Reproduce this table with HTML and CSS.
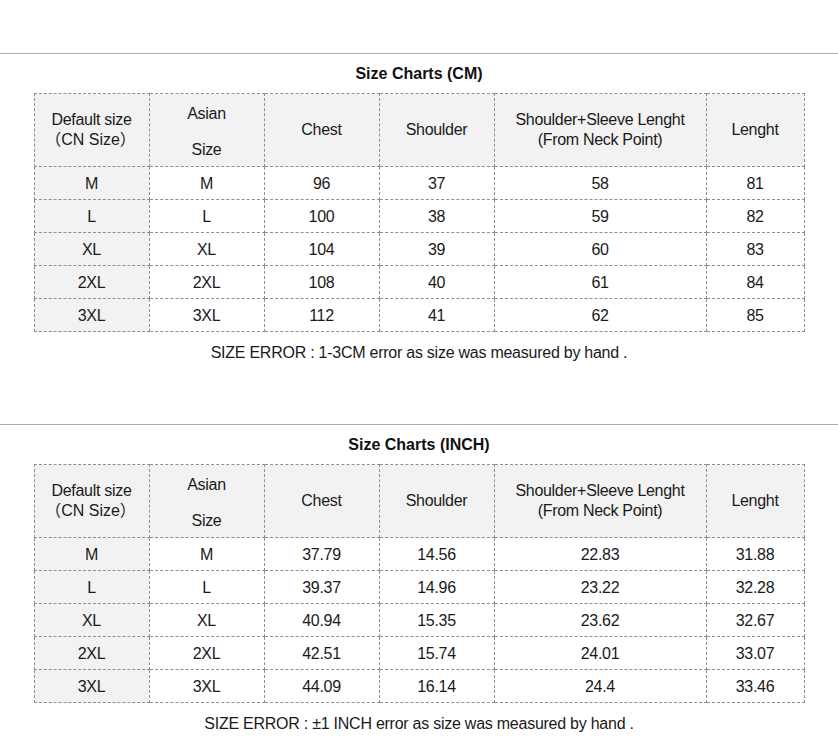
FILE: index.html
```html
<!DOCTYPE html>
<html>
<head>
<meta charset="utf-8">
<link rel="stylesheet" href="styles.css">
</head>
<body>
<div class="page">
  <section class="chart">
    <h2 class="title">Size Charts (CM)</h2>
    <table class="grid">
      <colgroup><col class="c1"><col class="c2"><col class="c3"><col class="c4"><col class="c5"><col class="c6"></colgroup>
      <tr class="head">
        <td class="first">Default size<br><span class="cn">（CN Size）</span></td>
        <td><span class="tall">Asian</span><span class="tall">Size</span></td>
        <td>Chest</td>
        <td>Shoulder</td>
        <td>Shoulder+Sleeve Lenght<br>(From Neck Point)</td>
        <td>Lenght</td>
      </tr>
      <tr><td class="first">M</td><td>M</td><td>96</td><td>37</td><td>58</td><td>81</td></tr>
      <tr><td class="first">L</td><td>L</td><td>100</td><td>38</td><td>59</td><td>82</td></tr>
      <tr><td class="first">XL</td><td>XL</td><td>104</td><td>39</td><td>60</td><td>83</td></tr>
      <tr><td class="first">2XL</td><td>2XL</td><td>108</td><td>40</td><td>61</td><td>84</td></tr>
      <tr><td class="first">3XL</td><td>3XL</td><td>112</td><td>41</td><td>62</td><td>85</td></tr>
    </table>
    <p class="note">SIZE ERROR : 1-3CM error as size was measured by hand .</p>
  </section>
  <section class="chart">
    <h2 class="title">Size Charts (INCH)</h2>
    <table class="grid">
      <colgroup><col class="c1"><col class="c2"><col class="c3"><col class="c4"><col class="c5"><col class="c6"></colgroup>
      <tr class="head">
        <td class="first">Default size<br><span class="cn">（CN Size）</span></td>
        <td><span class="tall">Asian</span><span class="tall">Size</span></td>
        <td>Chest</td>
        <td>Shoulder</td>
        <td>Shoulder+Sleeve Lenght<br>(From Neck Point)</td>
        <td>Lenght</td>
      </tr>
      <tr><td class="first">M</td><td>M</td><td>37.79</td><td>14.56</td><td>22.83</td><td>31.88</td></tr>
      <tr><td class="first">L</td><td>L</td><td>39.37</td><td>14.96</td><td>23.22</td><td>32.28</td></tr>
      <tr><td class="first">XL</td><td>XL</td><td>40.94</td><td>15.35</td><td>23.62</td><td>32.67</td></tr>
      <tr><td class="first">2XL</td><td>2XL</td><td>42.51</td><td>15.74</td><td>24.01</td><td>33.07</td></tr>
      <tr><td class="first">3XL</td><td>3XL</td><td>44.09</td><td>16.14</td><td>24.4</td><td>33.46</td></tr>
    </table>
    <p class="note">SIZE ERROR : ±1 INCH error as size was measured by hand .</p>
  </section>
</div>
</body>
</html>
```

FILE: styles.css
```css
html, body {
  margin: 0;
  padding: 0;
  background: #ffffff;
}
body {
  font-family: "Liberation Sans", Arial, "Noto Sans CJK SC", sans-serif;
  color: #1a1a1a;
  font-size: 16px;
}
.page {
  padding-top: 53px;
}
.chart {
  border-top: 1px solid #aaaaaa;
  margin-bottom: 50px;
}
.title {
  margin: 0;
  height: 39px;
  line-height: 39px;
  text-align: center;
  font-size: 16px;
  font-weight: bold;
  color: #111;
}
.grid {
  border-collapse: collapse;
  width: 771px;
  margin: 0 auto;
  table-layout: fixed;
}
.c1, .c2, .c3, .c4 { width: 115px; }
.c5 { width: 212px; }
.c6 { width: 98px; }
.grid td {
  border: 1px dashed #8f8f8f;
  text-align: center;
  vertical-align: middle;
  height: 30px;
  padding: 2px 0 0 0;
  line-height: 20px;
  letter-spacing: -0.3px;
}
.grid .head td {
  height: 72px;
  padding: 0;
  background: #f2f2f2;
}
.grid td.first {
  background: #f2f2f2;
}
.cn {
  letter-spacing: 0;
  padding-right: 2px;
}
.tall {
  display: block;
  line-height: 36px;
  position: relative;
  top: 2px;
}
.note {
  margin: 0;
  height: 42px;
  line-height: 42px;
  text-align: center;
  letter-spacing: -0.25px;
}
```
